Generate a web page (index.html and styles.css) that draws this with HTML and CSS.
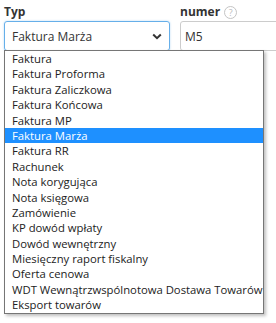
FILE: index.html
```html
<!DOCTYPE html>
<html lang="pl">
<head>
<meta charset="utf-8">
<link rel="stylesheet" href="styles.css">
</head>
<body>
<div class="form">
  <div class="field field-typ">
    <label class="label">Typ</label>
    <div class="select">
      <span class="select-value">Faktura Marża</span>
      <svg class="chevron" width="10" height="7" viewBox="0 0 10 7"><path d="M1.2 1.5 L5 5.2 L8.8 1.5" fill="none" stroke="#333" stroke-width="2"/></svg>
    </div>
    <div class="options">
      <div class="option">Faktura</div>
      <div class="option">Faktura Proforma</div>
      <div class="option">Faktura Zaliczkowa</div>
      <div class="option">Faktura Końcowa</div>
      <div class="option">Faktura MP</div>
      <div class="option selected">Faktura Marża</div>
      <div class="option">Faktura RR</div>
      <div class="option">Rachunek</div>
      <div class="option">Nota korygująca</div>
      <div class="option">Nota księgowa</div>
      <div class="option">Zamówienie</div>
      <div class="option">KP dowód wpłaty</div>
      <div class="option">Dowód wewnętrzny</div>
      <div class="option">Miesięczny raport fiskalny</div>
      <div class="option">Oferta cenowa</div>
      <div class="option">WDT Wewnątrzwspólnotowa Dostawa Towarów</div>
      <div class="option">Eksport towarów</div>
    </div>
  </div>
  <div class="field field-numer">
    <label class="label">numer <span class="help">?</span></label>
    <div class="input">M5</div>
  </div>
</div>
</body>
</html>
```

FILE: styles.css
```css
html, body {
  margin: 0;
  padding: 0;
  background: #fff;
}
body {
  font-family: "Open Sans", "DejaVu Sans", sans-serif;
  color: #333;
  width: 276px;
  height: 323px;
}
.form {
  display: flex;
  gap: 10px;
  padding: 4px 0 0 4px;
}
.field {
  display: flex;
  flex-direction: column;
  flex-shrink: 0;
}
.field-typ {
  position: relative;
  width: 166px;
  z-index: 2;
}
.field-numer {
  width: 96px;
  overflow: hidden;
}
.label {
  font-weight: bold;
  font-size: 12px;
  line-height: 16px;
  height: 16px;
  display: flex;
  align-items: center;
  gap: 4px;
}
.help {
  display: inline-flex;
  align-items: center;
  justify-content: center;
  width: 11px;
  height: 11px;
  border: 1px solid #c4c4c4;
  border-radius: 50%;
  color: #bbb;
  font-size: 9px;
  font-weight: normal;
  line-height: 1;
}
.select, .input {
  box-sizing: border-box;
  height: 30px;
  margin-top: 1px;
  border-radius: 3px;
  display: flex;
  align-items: center;
  font-size: 12px;
  flex-shrink: 0;
}
.select {
  border: 1px solid #66afe9;
  box-shadow: 0 0 2px rgba(102, 175, 233, 0.5);
  padding: 0 7px 0 7px;
  justify-content: space-between;
}
.input {
  width: 110px;
  border: 1px solid #ccc;
  padding: 0 4px;
}
.chevron {
  display: block;
}
.options {
  position: absolute;
  left: 0;
  top: 46px;
  width: 260px;
  box-sizing: border-box;
  background: #fff;
  border: 1px solid #767676;
  box-shadow: 2px 2px 3px rgba(0, 0, 0, 0.25);
  font-family: "Open Sans", sans-serif;
  font-size: 11.3px;
  color: #222;
}
.option {
  height: 15.4px;
  line-height: 15.4px;
  padding-left: 7px;
  white-space: nowrap;
}
.option.selected {
  background: #1e90ff;
  color: #fff;
}
```
